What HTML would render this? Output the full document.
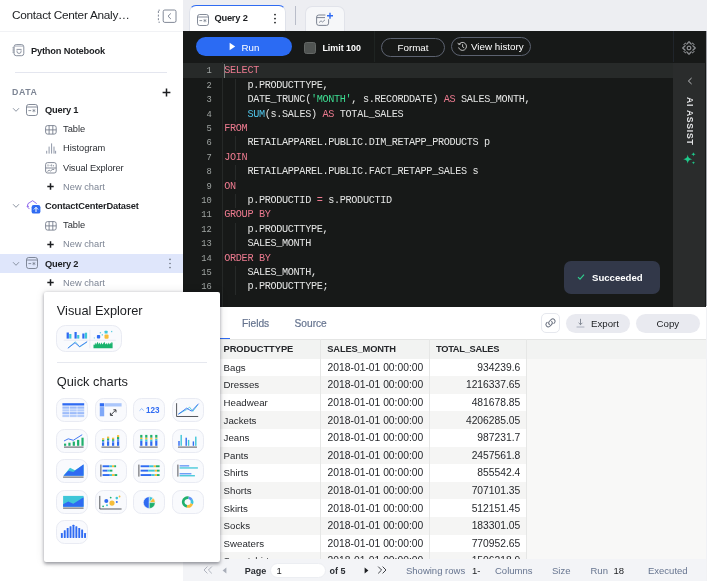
<!DOCTYPE html>
<html>
<head>
<meta charset="utf-8">
<title>Query 2</title>
<style>
*{box-sizing:border-box;margin:0;padding:0}
html,body{width:707px;height:581px;overflow:hidden;background:#fff;font-family:"Liberation Sans",sans-serif;color:#1c1e21}
.abs{position:absolute}
#app{will-change:transform;position:relative;width:707px;height:581px;overflow:hidden}
/* sidebar */
#side{position:absolute;left:0;top:0;width:183px;height:581px;background:#fff}
#side .title{position:absolute;left:12px;top:8.4px;font-size:11.8px;letter-spacing:-0.27px;color:#1c1e21;white-space:nowrap}
#side .hdrline{position:absolute;left:0;top:31px;width:183px;height:1px;background:#f1f2f5}
.row{position:absolute;left:0;width:183px;height:19.2px;font-size:9.3px;line-height:19.2px;white-space:nowrap}
.row .t{position:absolute;top:0}
.row.b .t,.sbt{font-weight:bold;color:#1c1e21;font-size:9.3px;letter-spacing:-0.2px;white-space:nowrap}
.row.n .t{color:#2b2e33}
.row.g .t{color:#7d8594}
.chev{position:absolute;left:12px;top:6px;width:8px;height:8px}
/* main */
#tabs{position:absolute;left:183px;top:0;width:524px;height:31px;background:#edeef2}
#editor{position:absolute;left:183px;top:31.2px;width:522.8px;height:275.7px;background:#171918}
#toolbar{position:absolute;left:0;top:0;width:522.5px;height:31px;background:#171918}
.code{position:absolute;left:0;top:31px;width:490px;height:245px;font-family:"Liberation Mono",monospace;font-size:10.2px;letter-spacing:-0.34px;line-height:14.4px;color:#e4e5e4;white-space:pre}
.ln{position:absolute;left:0.6px;width:28px;text-align:right;color:#9fa4a2;font-size:8.8px;letter-spacing:-0.1px;height:14.4px}
.cl{position:absolute;left:41.3px;height:14.4px}
.k{color:#ec7a8f}.f{color:#4fc3e8}.s{color:#3ddc91}
#results{position:absolute;left:183px;top:307px;width:524px;height:274px;background:#fff}
.hc{position:absolute;top:1.2px;height:19px;line-height:19px;font-size:9.3px;letter-spacing:-0.05px;font-weight:bold;color:#26282c;white-space:nowrap}
.tr{position:absolute;left:0;width:343.5px;height:17.6px;font-size:10.3px;line-height:17.6px;color:#26282c;white-space:nowrap}
.tr span{position:absolute;top:0.2px}
.c1{left:40.6px;font-size:9.7px}.c2{left:144.6px}.c3{right:6.2px}
.sb{top:0.8px}
#pop{position:absolute;left:44px;top:292.2px;width:175.6px;height:270.2px;background:#fff;border-radius:2px;box-shadow:0 1.5px 3.5px rgba(10,12,25,0.38),0 0 10px rgba(10,12,25,0.10)}
.ic{position:absolute;width:32.2px;height:24px;border-radius:8.5px;background:#f9fafd;border:0.8px solid #e9ebf3;overflow:hidden}
.ic svg{position:absolute;left:-0.8px;top:-0.8px}
</style>
</head>
<body>
<div id="app">

<!-- MAIN -->
<div id="tabs">
  <div class="abs" style="left:6.4px;top:4.7px;width:96.6px;height:27px;background:#fff;border-radius:7px 7px 0 0;border:0.8px solid #dfe2ea;border-top:1.5px solid #2f6bf2;border-bottom:none"></div>
  <svg class="abs" style="left:13.6px;top:13.6px" width="12" height="12" viewBox="0 0 12 12" fill="none" stroke="#6f7787" stroke-width="0.85"><rect x="0.5" y="0.5" width="11" height="11" rx="2.2"/><path d="M0.5 3H11.5"/><path d="M2.4 6.6H5.2" stroke-width="0.8"/><path d="M7.9 4.9V8.3M6.4 5.8L9.4 7.4M9.4 5.8L6.4 7.4" stroke-width="0.6"/></svg>
  <div class="abs sbt" style="left:31.4px;top:12px;line-height:13px">Query 2</div>
  <svg class="abs" style="left:90.4px;top:13px" width="4" height="12" viewBox="0 0 4 12" fill="#1c1e21"><circle cx="2" cy="1.6" r="0.9"/><circle cx="2" cy="5.6" r="0.9"/><circle cx="2" cy="9.6" r="0.9"/></svg>
  <div class="abs" style="left:112.2px;top:6px;width:1px;height:19px;background:#b9bdc9"></div>
  <div class="abs" style="left:122.4px;top:6px;width:39.2px;height:26px;background:#f6f7f9;border-radius:7px 7px 0 0;border:0.8px solid #e1e3ea;border-bottom:none"></div>
  <svg class="abs" style="left:133px;top:11.6px" width="19" height="15" viewBox="0 0 19 15" fill="none"><rect x="0.6" y="3" width="12" height="10.4" rx="2.2" stroke="#6f7787" stroke-width="0.9"/><path d="M0.6 5.6H9" stroke="#6f7787" stroke-width="0.9"/><path d="M3 10.6L5 8.8L6.6 10L9 7.8" stroke="#6f7787" stroke-width="0.8"/><rect x="9.4" y="0" width="9" height="7.2" fill="#f6f7f9"/><path d="M14 0.8V6.8M11 3.8H17" stroke="#2f6bf2" stroke-width="1.4"/></svg>
</div>
<div class="abs" style="left:705px;top:31.2px;width:2px;height:275.3px;background:#a3a5ab"></div>
<div class="abs" style="left:705.8px;top:306.5px;width:2px;height:275px;background:#f1f2f5;z-index:3"></div>
<div id="editor">
  <div id="toolbar">
    <div class="abs" style="left:13px;top:6px;width:96px;height:19px;border-radius:10px;background:#2b6bf3"></div>
    <svg class="abs" style="left:46px;top:11px" width="7" height="9" viewBox="0 0 7 9" fill="#fff"><path d="M0.6 0.8L6.2 4.5L0.6 8.2Z"/></svg>
    <div class="abs" style="left:58.6px;top:9.4px;font-size:9.7px;line-height:13px;color:#fff">Run</div>
    <div class="abs" style="left:120.8px;top:10.5px;width:12.2px;height:12.2px;border-radius:2.5px;background:#505452;border:1px solid #646866"></div>
    <div class="abs" style="left:139.4px;top:10.4px;font-size:8.9px;font-weight:bold;line-height:13px;color:#fff;white-space:nowrap">Limit 100</div>
    <div class="abs" style="left:191px;top:0;width:1px;height:31px;background:#1f2422"></div>
    <div class="abs" style="left:198px;top:7px;width:64px;height:19px;border-radius:10px;border:1px solid #5c6270"></div>
    <div class="abs" style="left:198px;top:10px;width:64px;text-align:center;font-size:9.8px;line-height:13px;color:#fff">Format</div>
    <div class="abs" style="left:268px;top:6px;width:80px;height:19px;border-radius:10px;border:1px solid #5c6270"></div>
    <svg class="abs" style="left:274px;top:10px" width="11" height="11" viewBox="0 0 11 11" fill="none" stroke="#e6e6e6" stroke-width="0.8"><path d="M2 3.4A4 4 0 1 1 1.6 6.4"/><path d="M0.8 1.8L1.9 3.6L3.8 2.8" stroke-linejoin="round"/><path d="M5.6 3.2V5.8L7.2 6.8"/></svg>
    <div class="abs" style="left:288px;top:9px;font-size:9.8px;line-height:13px;color:#fff;white-space:nowrap">View history</div>
    <div class="abs" style="left:490px;top:0;width:1px;height:31px;background:#20252b"></div>
    <svg class="abs" style="left:499.4px;top:10px" width="14" height="14" viewBox="0 0 14 14" fill="none" stroke="#c9ccd1" stroke-width="0.8" stroke-linejoin="round"><path d="M5.90 2.64L6.00 0.98L8.00 0.98L8.10 2.64L9.31 3.14L10.55 2.04L11.96 3.45L10.86 4.69L11.36 5.90L13.02 6.00L13.02 8.00L11.36 8.10L10.86 9.31L11.96 10.55L10.55 11.96L9.31 10.86L8.10 11.36L8.00 13.02L6.00 13.02L5.90 11.36L4.69 10.86L3.45 11.96L2.04 10.55L3.14 9.31L2.64 8.10L0.98 8.00L0.98 6.00L2.64 5.90L3.14 4.69L2.04 3.45L3.45 2.04L4.69 3.14Z"/><circle cx="7" cy="7" r="1.9"/></svg>
  </div>
  <div class="code" id="code">
<div class="abs" style="left:0;top:1.3px;width:490px;height:14.6px;background:#272a29"></div>
<div class="abs" style="left:38.5px;top:0;width:1px;height:245px;background:#262928"></div>
<div class="abs" style="left:41px;top:1.8px;width:1.2px;height:13.8px;background:#7d8381"></div>
<div class="ln" style="top:2.2px">1</div><div class="cl" style="top:2.2px"><span class="k">SELECT</span></div>
<div class="abs" style="left:52.3px;top:16.6px;width:1px;height:14.4px;background:#272a29"></div><div class="ln" style="top:16.6px">2</div><div class="cl" style="top:16.6px">    p.PRODUCTTYPE,</div>
<div class="abs" style="left:52.3px;top:31.0px;width:1px;height:14.4px;background:#272a29"></div><div class="ln" style="top:31.0px">3</div><div class="cl" style="top:31.0px">    DATE_TRUNC(<span class="s">'MONTH'</span>, s.RECORDDATE) <span class="k">AS</span> SALES_MONTH,</div>
<div class="abs" style="left:52.3px;top:45.4px;width:1px;height:14.4px;background:#272a29"></div><div class="ln" style="top:45.4px">4</div><div class="cl" style="top:45.4px">    <span class="f">SUM</span>(s.SALES) <span class="k">AS</span> TOTAL_SALES</div>
<div class="ln" style="top:59.8px">5</div><div class="cl" style="top:59.8px"><span class="k">FROM</span></div>
<div class="abs" style="left:52.3px;top:74.2px;width:1px;height:14.4px;background:#272a29"></div><div class="ln" style="top:74.2px">6</div><div class="cl" style="top:74.2px">    RETAILAPPAREL.PUBLIC.DIM_RETAPP_PRODUCTS p</div>
<div class="ln" style="top:88.6px">7</div><div class="cl" style="top:88.6px"><span class="k">JOIN</span></div>
<div class="abs" style="left:52.3px;top:103.0px;width:1px;height:14.4px;background:#272a29"></div><div class="ln" style="top:103.0px">8</div><div class="cl" style="top:103.0px">    RETAILAPPAREL.PUBLIC.FACT_RETAPP_SALES s</div>
<div class="ln" style="top:117.4px">9</div><div class="cl" style="top:117.4px"><span class="k">ON</span></div>
<div class="abs" style="left:52.3px;top:131.8px;width:1px;height:14.4px;background:#272a29"></div><div class="ln" style="top:131.8px">10</div><div class="cl" style="top:131.8px">    p.PRODUCTID <span class="k">=</span> s.PRODUCTID</div>
<div class="ln" style="top:146.2px">11</div><div class="cl" style="top:146.2px"><span class="k">GROUP BY</span></div>
<div class="abs" style="left:52.3px;top:160.6px;width:1px;height:14.4px;background:#272a29"></div><div class="ln" style="top:160.6px">12</div><div class="cl" style="top:160.6px">    p.PRODUCTTYPE,</div>
<div class="abs" style="left:52.3px;top:175.0px;width:1px;height:14.4px;background:#272a29"></div><div class="ln" style="top:175.0px">13</div><div class="cl" style="top:175.0px">    SALES_MONTH</div>
<div class="ln" style="top:189.4px">14</div><div class="cl" style="top:189.4px"><span class="k">ORDER BY</span></div>
<div class="abs" style="left:52.3px;top:203.8px;width:1px;height:14.4px;background:#272a29"></div><div class="ln" style="top:203.8px">15</div><div class="cl" style="top:203.8px">    SALES_MONTH,</div>
<div class="abs" style="left:52.3px;top:218.2px;width:1px;height:14.4px;background:#272a29"></div><div class="ln" style="top:218.2px">16</div><div class="cl" style="top:218.2px">    p.PRODUCTTYPE;</div>
</div>
  <div class="abs" id="ai" style="left:490.4px;top:32px;width:32.1px;height:244px;background:#2a2c2c">
    <svg class="abs" style="left:13.2px;top:13.6px" width="6" height="8" viewBox="0 0 6 8" fill="none" stroke="#d5d7da" stroke-width="0.85"><path d="M4.6 1L1.4 4L4.6 7"/></svg>
    <div class="abs" style="left:0;top:34px;width:33px;height:50px"><div style="position:absolute;left:16.2px;top:0;transform-origin:0 0;transform:rotate(90deg) translate(0,-50%);font-size:8.6px;font-weight:bold;letter-spacing:0.75px;color:#e3e4e6;white-space:nowrap;line-height:10px">AI ASSIST</div></div>
    <svg class="abs" style="left:9px;top:88px" width="15.4" height="15.4" viewBox="0 0 14 14" fill="#1fc98b"><path d="M5.2 3.2C5.6 6 6.4 6.9 9.4 7.4C6.4 7.9 5.6 8.8 5.2 11.6C4.8 8.8 4 7.9 1 7.4C4 6.9 4.8 6 5.2 3.2Z"/><path d="M10.4 0.8C10.6 2.2 11 2.6 12.6 2.9C11 3.2 10.6 3.6 10.4 5C10.2 3.6 9.8 3.2 8.2 2.9C9.8 2.6 10.2 2.2 10.4 0.8Z"/><path d="M10.4 9.2C10.55 10.2 10.85 10.5 12 10.7C10.85 10.9 10.55 11.2 10.4 12.2C10.25 11.2 9.95 10.9 8.8 10.7C9.95 10.5 10.25 10.2 10.4 9.2Z"/></svg>
  </div>
  <div class="abs" id="toast" style="left:381px;top:230.2px;width:96px;height:32.2px;border-radius:7px;background:#323849">
    <svg class="abs" style="left:13px;top:12px" width="8" height="8" viewBox="0 0 8 8" fill="none" stroke="#2fd08f" stroke-width="1.1"><path d="M1 4.2L3 6.2L7 1.6"/></svg>
    <div class="abs" style="left:28px;top:10px;font-size:9.6px;font-weight:bold;line-height:13px;color:#fff;white-space:nowrap">Succeeded</div>
  </div>
</div>
<div id="results">
  <div class="abs" style="left:36px;top:31px;width:11px;height:2px;background:#2f6bf2"></div>
  <div class="abs" style="left:59px;top:10px;font-size:10.2px;line-height:13px;color:#66748f;-webkit-text-stroke:0.2px #66748f;white-space:nowrap">Fields</div>
  <div class="abs" style="left:111.5px;top:10px;font-size:10.2px;line-height:13px;color:#66748f;-webkit-text-stroke:0.2px #66748f;white-space:nowrap">Source</div>
  <div class="abs" style="left:358px;top:6px;width:19px;height:20px;border:1px solid #e6e8ee;border-radius:5px;background:#fff"></div>
  <svg class="abs" style="left:361px;top:10.2px" width="13" height="11.8" viewBox="0 0 11 10" fill="none" stroke="#6b7280" stroke-width="0.85" stroke-linecap="round"><path d="M4.6 6.4a2 2 0 0 1 0-2.8l1.6-1.6a2 2 0 0 1 2.8 2.8l-0.7 0.7"/><path d="M6.4 3.6a2 2 0 0 1 0 2.8l-1.6 1.6a2 2 0 0 1-2.8-2.8l0.7-0.7"/></svg>
  <div class="abs" style="left:383px;top:7px;width:64px;height:18.5px;border-radius:10px;background:#e9eaf0"></div>
  <svg class="abs" style="left:393px;top:11px" width="9" height="10" viewBox="0 0 9 10" fill="none" stroke="#6b7280" stroke-width="0.8"><path d="M4.5 0.8V6.6M2.6 4.8L4.5 6.7L6.4 4.8"/><path d="M0.6 9H8.4" stroke="#9aa1b0"/></svg>
  <div class="abs" style="left:408px;top:10px;font-size:9.7px;line-height:13px;color:#1c1e21">Export</div>
  <div class="abs" style="left:453px;top:7px;width:63.8px;height:18.5px;border-radius:10px;background:#e9eaf0"></div>
  <div class="abs" style="left:453px;top:10px;width:63.8px;text-align:center;font-size:9.7px;line-height:13px;color:#1c1e21">Copy</div>

  <div class="abs" id="grid" style="left:0;top:32px;width:524px;height:220px;background:#f8f8f7;overflow:hidden">
    <div class="abs" style="left:0;top:0;width:524px;height:19.6px;background:#f2f3f2;border-top:1px solid #e4e5e4"></div>
    <div class="hc" style="left:40.5px">PRODUCTTYPE</div>
    <div class="hc" style="left:144.3px;letter-spacing:-0.15px">SALES_MONTH</div>
    <div class="hc" style="left:253px;letter-spacing:-0.29px">TOTAL_SALES</div>
    <div class="tr" style="top:19.6px;background:#fff"><span class="c1">Bags</span><span class="c2">2018-01-01 00:00:00</span><span class="c3">934239.6</span></div>
    <div class="tr" style="top:37.2px;background:#f5f5f4"><span class="c1">Dresses</span><span class="c2">2018-01-01 00:00:00</span><span class="c3">1216337.65</span></div>
    <div class="tr" style="top:54.8px;background:#fff"><span class="c1">Headwear</span><span class="c2">2018-01-01 00:00:00</span><span class="c3">481678.85</span></div>
    <div class="tr" style="top:72.4px;background:#f5f5f4"><span class="c1">Jackets</span><span class="c2">2018-01-01 00:00:00</span><span class="c3">4206285.05</span></div>
    <div class="tr" style="top:90.0px;background:#fff"><span class="c1">Jeans</span><span class="c2">2018-01-01 00:00:00</span><span class="c3">987231.7</span></div>
    <div class="tr" style="top:107.6px;background:#f5f5f4"><span class="c1">Pants</span><span class="c2">2018-01-01 00:00:00</span><span class="c3">2457561.8</span></div>
    <div class="tr" style="top:125.2px;background:#fff"><span class="c1">Shirts</span><span class="c2">2018-01-01 00:00:00</span><span class="c3">855542.4</span></div>
    <div class="tr" style="top:142.8px;background:#f5f5f4"><span class="c1">Shorts</span><span class="c2">2018-01-01 00:00:00</span><span class="c3">707101.35</span></div>
    <div class="tr" style="top:160.4px;background:#fff"><span class="c1">Skirts</span><span class="c2">2018-01-01 00:00:00</span><span class="c3">512151.45</span></div>
    <div class="tr" style="top:178.0px;background:#f5f5f4"><span class="c1">Socks</span><span class="c2">2018-01-01 00:00:00</span><span class="c3">183301.05</span></div>
    <div class="tr" style="top:195.6px;background:#fff"><span class="c1">Sweaters</span><span class="c2">2018-01-01 00:00:00</span><span class="c3">770952.65</span></div>
    <div class="tr" style="top:213.2px;background:#f5f5f4"><span class="c1">Sweatshirts</span><span class="c2">2018-01-01 00:00:00</span><span class="c3">1506218.9</span></div>
    <div class="abs" style="left:137px;top:0;width:1px;height:252px;background:#e6e7e6"></div>
    <div class="abs" style="left:246.2px;top:0;width:1px;height:252px;background:#e6e7e6"></div>
    <div class="abs" style="left:343px;top:0;width:1px;height:252px;background:#e6e7e6"></div>
  </div>

  <div class="abs" id="status" style="left:0;top:252px;width:524px;height:22px;background:#f3f4f7;font-size:9.5px;line-height:22px;white-space:nowrap">
    <svg class="abs" style="left:20px;top:7px" width="10" height="8" viewBox="0 0 10 8" fill="none" stroke="#a8adb8" stroke-width="0.9"><path d="M4.4 0.6L1 4L4.4 7.4M8.8 0.6L5.4 4L8.8 7.4"/></svg>
    <svg class="abs" style="left:39px;top:8px" width="5" height="7" viewBox="0 0 5 7" fill="#a8adb8"><path d="M4.4 0.4L0.6 3.5L4.4 6.6Z"/></svg>
    <div class="abs sb" style="left:61.8px;font-weight:bold;font-size:9px;color:#2b2e33">Page</div>
    <div class="abs" style="left:86.6px;top:4.2px;width:56.4px;height:15.2px;border-radius:8px;background:#fff;border:0.6px solid #eceef2"></div>
    <div class="abs sb" style="left:93.4px;color:#1c1e21">1</div>
    <div class="abs sb" style="left:146.6px;font-weight:bold;font-size:9px;color:#2b2e33">of 5</div>
    <svg class="abs" style="left:181px;top:8px" width="5" height="7" viewBox="0 0 5 7" fill="#1c1e21"><path d="M0.6 0.4L4.4 3.5L0.6 6.6Z"/></svg>
    <svg class="abs" style="left:194px;top:7px" width="10" height="8" viewBox="0 0 10 8" fill="none" stroke="#2b2e33" stroke-width="0.9"><path d="M1.2 0.6L4.6 4L1.2 7.4M5.6 0.6L9 4L5.6 7.4"/></svg>
    <div class="abs sb" style="left:223px;color:#66748f">Showing rows</div>
    <div class="abs sb" style="left:289px;color:#1c1e21">1-</div>
    <div class="abs sb" style="left:312px;color:#66748f">Columns</div>
    <div class="abs sb" style="left:369px;color:#66748f">Size</div>
    <div class="abs sb" style="left:407.5px;color:#66748f">Run</div>
    <div class="abs sb" style="left:430.5px;color:#1c1e21">18</div>
    <div class="abs sb" style="left:465px;color:#66748f">Executed</div>
  </div>
</div>

<!-- SIDEBAR -->
<div id="side">
  <div class="title">Contact Center Analy…</div>
  <svg class="abs" style="left:156px;top:8px" width="22" height="16" viewBox="0 0 22 16" fill="none" stroke="#737b8b" stroke-width="0.9">
    <rect x="7.2" y="2" width="12.8" height="12.4" rx="1.6"/>
    <path d="M14.6 5.7L12 8.2L14.6 10.7" stroke-linecap="round" stroke-linejoin="round"/>
    <path d="M2.4 3V13.6" stroke-dasharray="2 1.6"/><path d="M2.4 2.2H4M2.4 14.2H4" stroke-width="0.8"/>
  </svg>
  <div class="hdrline"></div>
  <svg class="abs" style="left:12px;top:44px" width="13" height="13" viewBox="0 0 13 13" fill="none" stroke="#737b8b" stroke-width="0.85">
    <rect x="2" y="0.6" width="9.8" height="11.1" rx="2.3"/>
    <path d="M2.3 1.6H11.5V2.6H2.3Z" fill="#a9aebb" stroke="none"/>
    <path d="M0.7 3.9H2M0.7 6H2M0.7 8.1H2" stroke-linecap="round" stroke-width="0.7"/>
    <path d="M4.5 5.4H9.6" stroke-width="0.8"/>
    <path d="M5 6.4V7.4a2.05 2.05 0 0 0 4.1 0V6.4" stroke-width="0.8"/>
  </svg>
  <div class="abs sbt" style="left:31px;top:44.8px;line-height:13px">Python Notebook</div>
  <div class="abs" style="left:15px;top:72px;width:152px;height:1px;background:#e4e6ef"></div>
  <div class="abs" style="left:12px;top:86px;font-size:8.8px;font-weight:bold;letter-spacing:0.6px;color:#7d8594;line-height:12px">DATA</div>
  <svg class="abs" style="left:162px;top:88px" width="9" height="9" viewBox="0 0 9 9" stroke="#1c1e21" stroke-width="1.5"><path d="M4.5 0.6V8.4M0.6 4.5H8.4"/></svg>
  <svg class="abs" style="left:12px;top:107.2px" width="8" height="6" viewBox="0 0 8 6" fill="none" stroke="#7b8494" stroke-width="0.85" stroke-linecap="round" stroke-linejoin="round"><path d="M1.3 1.5L4 4.3L6.7 1.5"/></svg><svg class="abs" style="left:26.3px;top:103.8px" width="12" height="12" viewBox="0 0 12 12" fill="none" stroke="#6f7787" stroke-width="0.85"><rect x="0.5" y="0.5" width="11" height="11" rx="2.2"/><path d="M0.5 3H11.5"/><path d="M2.4 6.6H5.2" stroke-width="0.8"/><path d="M7.9 4.9V8.3M6.4 5.8L9.4 7.4M9.4 5.8L6.4 7.4" stroke-width="0.6"/></svg><div class="row b" style="top:100.2px"><span class="t" style="left:45px;top:0.8px">Query 1</span></div>
  <svg class="abs" style="left:44.6px;top:124.7px" width="12" height="10" viewBox="0 0 12 10" fill="none" stroke="#6f7787" stroke-width="0.85"><rect x="0.6" y="0.6" width="10.6" height="8.5" rx="2"/><path d="M0.6 4.9H11.2M4.1 0.6V9.1M7.8 0.6V9.1"/></svg><div class="row n" style="top:119.4px"><span class="t" style="left:63px;top:0.8px">Table</span></div>
  <svg class="abs" style="left:46px;top:142.6px" width="11" height="11" viewBox="0 0 11 11" fill="none" stroke="#8a92a3" stroke-width="0.95"><path d="M0.7 10.6V7.8M3.1 10.6V3.6M5.6 10.6V0.4M8 10.6V3.6M9.6 10.6V7.8"/></svg><div class="row n" style="top:138.6px"><span class="t" style="left:63px;top:0.8px">Histogram</span></div>
  <svg class="abs" style="left:44.6px;top:161.6px" width="12" height="12" viewBox="0 0 12 12" fill="none" stroke="#6f7787" stroke-width="0.85"><rect x="0.6" y="0.6" width="10.6" height="10.4" rx="2"/><path d="M0.6 6H11.2"/><path d="M3 2.4V4.4M4.6 3.4H5.6M6.6 2.4V4.4M8.4 3V4.4" stroke-width="0.7"/><path d="M2.4 9.4L4.2 8.2L5.6 9L7.2 7.6L9.2 7.4" stroke-width="0.8" stroke-linejoin="round"/></svg><div class="row n" style="top:157.8px"><span class="t" style="left:63px;top:0.8px;letter-spacing:-0.12px">Visual Explorer</span></div>
  <svg class="abs" style="left:47.3px;top:183.1px" width="7" height="7" viewBox="0 0 7 7" stroke="#1c1e21" stroke-width="1.5"><path d="M3.5 0.3V6.7M0.3 3.5H6.7"/></svg><div class="row g" style="top:177.0px"><span class="t" style="left:63px;top:0.8px">New chart</span></div>
  <svg class="abs" style="left:12px;top:203.2px" width="8" height="6" viewBox="0 0 8 6" fill="none" stroke="#7b8494" stroke-width="0.85" stroke-linecap="round" stroke-linejoin="round"><path d="M1.3 1.5L4 4.3L6.7 1.5"/></svg><svg class="abs" style="left:25px;top:199.9px" width="17" height="16" viewBox="0 0 17 16" fill="none"><path d="M4.2 8.8L2.2 6.7L3 3.6L7.6 0.7L11.4 3.4" stroke="#7a4ce8" stroke-width="0.8" stroke-linejoin="round" stroke-linecap="round"/><path d="M2.2 6.7L4 6.2" stroke="#7a4ce8" stroke-width="0.8"/><rect x="6.6" y="5" width="8.8" height="8.6" rx="2.2" fill="#2f6bf2"/><path d="M11 11.6V7.6M9.2 9.2L11 7.4L12.8 9.2" stroke="#fff" stroke-width="1" stroke-linecap="round" stroke-linejoin="round"/></svg><div class="row b" style="top:196.2px"><span class="t" style="left:45px;top:0.8px">ContactCenterDataset</span></div>
  <svg class="abs" style="left:44.6px;top:220.7px" width="12" height="10" viewBox="0 0 12 10" fill="none" stroke="#6f7787" stroke-width="0.85"><rect x="0.6" y="0.6" width="10.6" height="8.5" rx="2"/><path d="M0.6 4.9H11.2M4.1 0.6V9.1M7.8 0.6V9.1"/></svg><div class="row n" style="top:215.4px"><span class="t" style="left:63px;top:0.8px">Table</span></div>
  <svg class="abs" style="left:47.3px;top:240.7px" width="7" height="7" viewBox="0 0 7 7" stroke="#1c1e21" stroke-width="1.5"><path d="M3.5 0.3V6.7M0.3 3.5H6.7"/></svg><div class="row g" style="top:234.6px"><span class="t" style="left:63px;top:0.8px">New chart</span></div>
  <div class="abs" style="left:0;top:253.9px;width:183px;height:19.2px;background:#dfe6fb"></div>
  <svg class="abs" style="left:12px;top:260.8px" width="8" height="6" viewBox="0 0 8 6" fill="none" stroke="#7b8494" stroke-width="0.85" stroke-linecap="round" stroke-linejoin="round"><path d="M1.3 1.5L4 4.3L6.7 1.5"/></svg><svg class="abs" style="left:26.3px;top:257.4px" width="12" height="12" viewBox="0 0 12 12" fill="none" stroke="#6f7787" stroke-width="0.85"><rect x="0.5" y="0.5" width="11" height="11" rx="2.2"/><path d="M0.5 3H11.5"/><path d="M2.4 6.6H5.2" stroke-width="0.8"/><path d="M7.9 4.9V8.3M6.4 5.8L9.4 7.4M9.4 5.8L6.4 7.4" stroke-width="0.6"/></svg><div class="row b" style="top:253.8px"><span class="t" style="left:45px;top:0.8px">Query 2</span></div><svg class="abs" style="left:168.2px;top:258.0px" width="4" height="11" viewBox="0 0 4 11" fill="#6b7280"><circle cx="2" cy="1.4" r="0.8"/><circle cx="2" cy="5.5" r="0.8"/><circle cx="2" cy="9.6" r="0.8"/></svg>
  <svg class="abs" style="left:47.3px;top:279.1px" width="7" height="7" viewBox="0 0 7 7" stroke="#1c1e21" stroke-width="1.5"><path d="M3.5 0.3V6.7M0.3 3.5H6.7"/></svg><div class="row g" style="top:273.0px"><span class="t" style="left:63px;top:0.8px">New chart</span></div>
</div>

<!-- POPUP -->
<div id="pop">
  <div class="abs" style="left:12.8px;top:11.1px;font-size:12.8px;line-height:16px;color:#1c1e21;white-space:nowrap">Visual Explorer</div>
  <div class="ic" style="left:12.4px;top:33.2px;width:65.4px;height:26.6px;border-radius:9.5px">
    <svg width="65.4" height="26.6" viewBox="0 0 65.4 26.6" fill="none">
      <path d="M6.8 14.3H58.7M32.9 3.9V22.3" stroke="#d9ddea" stroke-width="0.5"/>
      <rect x="9.6" y="6.5" width="2.3" height="6.1" fill="#2f6bf2"/><rect x="12.2" y="8" width="2.2" height="4.6" fill="#3ec6d8"/>
      <rect x="17.5" y="6" width="2.2" height="6.6" fill="#2f6bf2"/><rect x="20.2" y="9" width="2.1" height="3.6" fill="#3ec6d8"/>
      <rect x="25.3" y="7.5" width="2.2" height="5.1" fill="#2f6bf2"/><rect x="27.8" y="6.7" width="2.3" height="5.9" fill="#3ec6d8"/>
      <path d="M11.2 21.8L18.4 15.8L22.8 21L30 16" stroke="#3ec6d8" stroke-width="0.7"/>
      <path d="M10.8 22.3L18 16.8L22.5 20.6L30.2 15.6" stroke="#2f6bf2" stroke-width="0.8"/>
      <rect x="39.9" y="9" width="3.3" height="3.6" rx="0.8" fill="#2f6bf2"/>
      <rect x="47.5" y="8.5" width="4.1" height="4.3" rx="1.1" fill="#f6bd3a"/>
      <rect x="47.6" y="4.7" width="3" height="2.8" rx="0.5" fill="#3ec6d8"/>
      <rect x="42.8" y="6.1" width="1.3" height="1.3" fill="#3ec6d8" opacity="0.8"/><rect x="44.7" y="8.2" width="1.3" height="1.3" fill="#3ec6d8" opacity="0.8"/><rect x="36.8" y="11.4" width="1.1" height="1.1" fill="#3ec6d8" opacity="0.7"/><rect x="54" y="4.9" width="1.3" height="1.3" fill="#3ec6d8" opacity="0.8"/>
      <path d="M36.5 22.3V18.6L37.4 19.2L38.2 16.4L39 18.8L39.8 17.2L40.8 15.8L41.6 18.6L42.6 16.6L43.6 18.8L44.4 16.2L45.4 18.6L46.4 17.2L47.4 15.8L48.4 18.4L49.4 17L50.4 18.8L51.2 16.4L52.2 18.4L53.2 16.8L54 18L54.8 15.8L55.6 17V22.3Z" fill="#19b36e"/>
    </svg>
  </div>
  <div class="abs" style="left:12.7px;top:70.2px;width:150px;height:1px;background:#e6e8ef"></div>
  <div class="abs" style="left:12.8px;top:81.8px;font-size:12.8px;line-height:16px;color:#1c1e21;white-space:nowrap">Quick charts</div>
<!--ICONS-->
  <div class="ic" style="left:12.3px;top:105.9px"><svg width="32.2" height="24" viewBox="0 0 32.2 24" fill="none"><rect x="5.40" y="5.20" width="21.80" height="2.30" fill="#2f6bf2"/><rect x="5.40" y="8.50" width="6.90" height="2.20" fill="#9dbcfa"/><rect x="12.85" y="8.50" width="6.90" height="2.20" fill="#9dbcfa"/><rect x="20.30" y="8.50" width="6.90" height="2.20" fill="#9dbcfa"/><rect x="5.40" y="11.30" width="6.90" height="2.20" fill="#b5cdfb"/><rect x="12.85" y="11.30" width="6.90" height="2.20" fill="#b5cdfb"/><rect x="20.30" y="11.30" width="6.90" height="2.20" fill="#b5cdfb"/><rect x="5.40" y="14.10" width="6.90" height="2.20" fill="#9dbcfa"/><rect x="12.85" y="14.10" width="6.90" height="2.20" fill="#9dbcfa"/><rect x="20.30" y="14.10" width="6.90" height="2.20" fill="#9dbcfa"/><rect x="5.40" y="16.90" width="6.90" height="2.20" fill="#b5cdfb"/><rect x="12.85" y="16.90" width="6.90" height="2.20" fill="#b5cdfb"/><rect x="20.30" y="16.90" width="6.90" height="2.20" fill="#b5cdfb"/></svg></div>
  <div class="ic" style="left:50.7px;top:105.9px"><svg width="32.2" height="24" viewBox="0 0 32.2 24" fill="none"><rect x="4.80" y="5.20" width="4.40" height="3.30" fill="#2f6bf2"/><rect x="4.80" y="9.10" width="4.40" height="9.20" fill="#7fa8f8"/><rect x="9.80" y="5.20" width="16.80" height="3.30" fill="#aac6fb"/><path d="M15.8 17L20.6 12.2" stroke="#2a2d33" stroke-width="0.9"/><path d="M15.4 14.8V17.4H18M18.4 11.8H21V14.4" stroke="#2a2d33" stroke-width="0.9" stroke-linejoin="miter"/></svg></div>
  <div class="ic" style="left:89.1px;top:105.9px"><svg width="32.2" height="24" viewBox="0 0 32.2 24" fill="none"><path d="M6.6 12.6L8.7 10.6L10.8 12.6" stroke="#7fb0f8" stroke-width="0.9"/><text x="13" y="15.5" font-family="Liberation Sans, sans-serif" font-weight="bold" font-size="8.8" textLength="13.6" lengthAdjust="spacingAndGlyphs" fill="#2f6bf2">123</text></svg></div>
  <div class="ic" style="left:127.5px;top:105.9px"><svg width="32.2" height="24" viewBox="0 0 32.2 24" fill="none"><path d="M4.6 5.2V18.5H26.2" stroke="#2a2d33" stroke-width="0.8"/><path d="M6.6 15.8L14.6 11.6L17.6 9.2L20.8 13.4L25.6 7" stroke="#3ec6d8" stroke-width="0.8"/><path d="M6.3 16.3L14.6 10.2L19.6 13.1L26.6 5.7" stroke="#2f6bf2" stroke-width="0.9"/></svg></div>
  <div class="ic" style="left:12.3px;top:136.4px"><svg width="32.2" height="24" viewBox="0 0 32.2 24" fill="none"><rect x="7.00" y="14.60" width="2.20" height="2.20" fill="#1fb06d"/><rect x="11.36" y="13.70" width="2.20" height="3.10" fill="#1fb06d"/><rect x="15.72" y="12.60" width="2.20" height="4.20" fill="#1fb06d"/><rect x="20.08" y="10.90" width="2.20" height="5.90" fill="#1fb06d"/><rect x="24.44" y="8.70" width="2.20" height="8.10" fill="#1fb06d"/><path d="M7 12L11.3 9.8L16.3 11.3L25.2 5.7" stroke="#2f6bf2" stroke-width="0.9"/><path d="M7.0 18.1H26.6" stroke="#2a2d33" stroke-width="0.8"/></svg></div>
  <div class="ic" style="left:50.7px;top:136.4px"><svg width="32.2" height="24" viewBox="0 0 32.2 24" fill="none"><rect x="7.00" y="13.61" width="2.20" height="3.19" fill="#2f6bf2"/><rect x="7.00" y="12.09" width="2.20" height="1.52" fill="#5f93f6"/><rect x="7.00" y="10.57" width="2.20" height="1.52" fill="#1fb06d"/><rect x="7.00" y="9.20" width="2.20" height="1.37" fill="#f6bd3a"/><rect x="12.00" y="12.94" width="2.20" height="3.86" fill="#2f6bf2"/><rect x="12.00" y="11.10" width="2.20" height="1.84" fill="#5f93f6"/><rect x="12.00" y="9.26" width="2.20" height="1.84" fill="#1fb06d"/><rect x="12.00" y="7.60" width="2.20" height="1.66" fill="#f6bd3a"/><rect x="17.00" y="13.40" width="2.20" height="3.40" fill="#2f6bf2"/><rect x="17.00" y="11.78" width="2.20" height="1.62" fill="#5f93f6"/><rect x="17.00" y="10.16" width="2.20" height="1.62" fill="#1fb06d"/><rect x="17.00" y="8.70" width="2.20" height="1.46" fill="#f6bd3a"/><rect x="22.00" y="12.31" width="2.20" height="4.49" fill="#2f6bf2"/><rect x="22.00" y="10.17" width="2.20" height="2.14" fill="#5f93f6"/><rect x="22.00" y="8.03" width="2.20" height="2.14" fill="#1fb06d"/><rect x="22.00" y="6.10" width="2.20" height="1.93" fill="#f6bd3a"/><path d="M6.5 18.1H24.7" stroke="#2a2d33" stroke-width="0.8"/></svg></div>
  <div class="ic" style="left:89.1px;top:136.4px"><svg width="32.2" height="24" viewBox="0 0 32.2 24" fill="none"><rect x="7.20" y="11.89" width="2.20" height="4.91" fill="#2f6bf2"/><rect x="7.20" y="10.04" width="2.20" height="1.85" fill="#3ec6d8"/><rect x="7.20" y="8.62" width="2.20" height="1.42" fill="#f6bd3a"/><rect x="7.20" y="5.90" width="2.20" height="2.73" fill="#1fb06d"/><rect x="12.20" y="12.44" width="2.20" height="4.36" fill="#2f6bf2"/><rect x="12.20" y="10.26" width="2.20" height="2.18" fill="#3ec6d8"/><rect x="12.20" y="8.63" width="2.20" height="1.64" fill="#f6bd3a"/><rect x="12.20" y="5.90" width="2.20" height="2.73" fill="#1fb06d"/><rect x="17.20" y="12.22" width="2.20" height="4.58" fill="#2f6bf2"/><rect x="17.20" y="10.48" width="2.20" height="1.74" fill="#3ec6d8"/><rect x="17.20" y="8.63" width="2.20" height="1.85" fill="#f6bd3a"/><rect x="17.20" y="5.90" width="2.20" height="2.73" fill="#1fb06d"/><rect x="22.20" y="11.35" width="2.20" height="5.45" fill="#2f6bf2"/><rect x="22.20" y="9.72" width="2.20" height="1.64" fill="#3ec6d8"/><rect x="22.20" y="8.63" width="2.20" height="1.09" fill="#f6bd3a"/><rect x="22.20" y="5.90" width="2.20" height="2.73" fill="#1fb06d"/><path d="M6.5 18.1H24.7" stroke="#2a2d33" stroke-width="0.8"/></svg></div>
  <div class="ic" style="left:127.5px;top:136.4px"><svg width="32.2" height="24" viewBox="0 0 32.2 24" fill="none"><rect x="6.30" y="12.00" width="1.40" height="4.80" fill="#2f6bf2"/><rect x="8.50" y="5.90" width="1.40" height="10.90" fill="#3ec6d8"/><rect x="13.50" y="8.70" width="1.40" height="8.10" fill="#2f6bf2"/><rect x="15.90" y="10.90" width="1.40" height="5.90" fill="#3ec6d8"/><rect x="20.70" y="12.40" width="1.40" height="4.40" fill="#2f6bf2"/><rect x="23.10" y="7.60" width="1.40" height="9.20" fill="#3ec6d8"/><path d="M6.0 18.1H25.0" stroke="#2a2d33" stroke-width="0.8"/></svg></div>
  <div class="ic" style="left:12.3px;top:166.9px"><svg width="32.2" height="24" viewBox="0 0 32.2 24" fill="none"><path d="M6.5 16.8L13 8.7L17.9 11.3L26.6 5.7V16.8Z" fill="#3ec6d8"/><path d="M6.5 16.8L11.3 11.8L16.3 13.1L26.6 5.2V16.8Z" fill="#2f6bf2"/><path d="M6.1 18.1H26.6" stroke="#2a2d33" stroke-width="0.8"/></svg></div>
  <div class="ic" style="left:50.7px;top:166.9px"><svg width="32.2" height="24" viewBox="0 0 32.2 24" fill="none"><path d="M5.9 5.6V17.6" stroke="#2a2d33" stroke-width="0.8"/><rect x="7.60" y="6.30" width="6.60" height="1.90" fill="#2f6bf2"/><rect x="14.20" y="6.30" width="2.80" height="1.90" fill="#3ec6d8"/><rect x="17.00" y="6.30" width="2.20" height="1.90" fill="#f6bd3a"/><rect x="19.20" y="6.30" width="1.90" height="1.90" fill="#1fb06d"/><rect x="7.60" y="10.70" width="5.00" height="1.90" fill="#2f6bf2"/><rect x="12.60" y="10.70" width="2.20" height="1.90" fill="#3ec6d8"/><rect x="14.80" y="10.70" width="2.60" height="1.90" fill="#1fb06d"/><rect x="7.60" y="15.10" width="7.20" height="1.90" fill="#2f6bf2"/><rect x="14.80" y="15.10" width="2.20" height="1.90" fill="#3ec6d8"/><rect x="17.00" y="15.10" width="2.60" height="1.90" fill="#f6bd3a"/><rect x="19.60" y="15.10" width="2.60" height="1.90" fill="#1fb06d"/></svg></div>
  <div class="ic" style="left:89.1px;top:166.9px"><svg width="32.2" height="24" viewBox="0 0 32.2 24" fill="none"><path d="M5.9 5.6V17.6" stroke="#2a2d33" stroke-width="0.8"/><rect x="7.60" y="6.30" width="8.70" height="1.90" fill="#2f6bf2"/><rect x="16.30" y="6.30" width="4.40" height="1.90" fill="#3ec6d8"/><rect x="20.70" y="6.30" width="2.20" height="1.90" fill="#f6bd3a"/><rect x="22.90" y="6.30" width="3.70" height="1.90" fill="#1fb06d"/><rect x="7.60" y="10.70" width="7.60" height="1.90" fill="#2f6bf2"/><rect x="15.20" y="10.70" width="6.60" height="1.90" fill="#3ec6d8"/><rect x="21.80" y="10.70" width="2.20" height="1.90" fill="#f6bd3a"/><rect x="24.00" y="10.70" width="2.60" height="1.90" fill="#1fb06d"/><rect x="7.60" y="15.10" width="10.90" height="1.90" fill="#2f6bf2"/><rect x="18.50" y="15.10" width="3.30" height="1.90" fill="#3ec6d8"/><rect x="21.80" y="15.10" width="2.20" height="1.90" fill="#f6bd3a"/><rect x="24.00" y="15.10" width="2.60" height="1.90" fill="#1fb06d"/></svg></div>
  <div class="ic" style="left:127.5px;top:166.9px"><svg width="32.2" height="24" viewBox="0 0 32.2 24" fill="none"><path d="M5.9 5.6V17.6" stroke="#2a2d33" stroke-width="0.8"/><rect x="7.60" y="6.20" width="9.60" height="1.30" fill="#5f93f6"/><rect x="7.60" y="8.30" width="18.30" height="1.30" fill="#3ec6d8"/><rect x="7.60" y="14.10" width="11.80" height="1.30" fill="#5f93f6"/><rect x="7.60" y="16.10" width="15.30" height="1.30" fill="#3ec6d8"/></svg></div>
  <div class="ic" style="left:12.3px;top:197.4px"><svg width="32.2" height="24" viewBox="0 0 32.2 24" fill="none"><rect x="6.10" y="5.90" width="20.50" height="10.90" fill="#3ec6d8"/><path d="M6.1 16.8V14.2L11.3 11.5L16.3 13.7L26.6 7.2V16.8Z" fill="#2f6bf2"/><path d="M6.1 18.1H26.6" stroke="#2a2d33" stroke-width="0.8"/></svg></div>
  <div class="ic" style="left:50.7px;top:197.4px"><svg width="32.2" height="24" viewBox="0 0 32.2 24" fill="none"><path d="M4.8 5.9V19H26.6" stroke="#2a2d33" stroke-width="0.8"/><circle cx="11.3" cy="10.9" r="2.0" fill="#2f6bf2"/><circle cx="17.0" cy="13.1" r="2.6" fill="#f6bd3a"/><circle cx="21.8" cy="8.1" r="1.3" fill="#3ec6d8"/><circle cx="21.8" cy="12.0" r="1.0" fill="#2f6bf2"/><circle cx="15.7" cy="7.6" r="0.9" fill="#1fb06d"/><circle cx="12.0" cy="15.2" r="1.0" fill="#3ec6d8"/><circle cx="8.1" cy="16.3" r="0.9" fill="#1fb06d"/><circle cx="24.6" cy="6.5" r="0.9" fill="#f6bd3a"/></svg></div>
  <div class="ic" style="left:89.1px;top:197.4px"><svg width="32.2" height="24" viewBox="0 0 32.2 24" fill="none"><path d="M16.30 12.60L16.30 18.50A5.90 5.90 0 0 1 16.30 6.70Z" fill="#2f6bf2" stroke="#f8f9fc" stroke-width="0.5"/><path d="M16.30 12.60L16.30 6.70A5.90 5.90 0 0 1 20.09 8.08Z" fill="#3ec6d8" stroke="#f8f9fc" stroke-width="0.5"/><path d="M16.30 12.60L20.09 8.08A5.90 5.90 0 0 1 22.20 12.60Z" fill="#f6bd3a" stroke="#f8f9fc" stroke-width="0.5"/><path d="M16.30 12.60L22.20 12.60A5.90 5.90 0 0 1 16.30 18.50Z" fill="#1fb06d" stroke="#f8f9fc" stroke-width="0.5"/></svg></div>
  <div class="ic" style="left:127.5px;top:197.4px"><svg width="32.2" height="24" viewBox="0 0 32.2 24" fill="none"><path d="M14.94 16.33A4.40 4.40 0 1 1 16.61 7.70" stroke="#1fb06d" stroke-width="2.7"/><path d="M16.61 7.70A4.40 4.40 0 0 1 19.58 9.93" stroke="#5f93f6" stroke-width="2.7"/><path d="M19.58 9.93A4.40 4.40 0 0 1 19.78 13.65" stroke="#3ec6d8" stroke-width="2.7"/><path d="M19.78 13.65A4.40 4.40 0 0 1 14.94 16.33" stroke="#f6bd3a" stroke-width="2.7"/></svg></div>
  <div class="ic" style="left:12.3px;top:227.9px"><svg width="32.2" height="24" viewBox="0 0 32.2 24" fill="none"><rect x="3.90" y="13.00" width="1.90" height="4.90" fill="#2f6bf2" rx="0.4"/><rect x="6.80" y="10.20" width="1.90" height="7.70" fill="#2f6bf2" rx="0.4"/><rect x="9.70" y="8.10" width="1.90" height="9.80" fill="#2f6bf2" rx="0.4"/><rect x="12.60" y="6.30" width="1.90" height="11.60" fill="#2f6bf2" rx="0.4"/><rect x="15.50" y="4.80" width="1.90" height="13.10" fill="#2f6bf2" rx="0.4"/><rect x="18.40" y="6.30" width="1.90" height="11.60" fill="#2f6bf2" rx="0.4"/><rect x="21.30" y="8.10" width="1.90" height="9.80" fill="#2f6bf2" rx="0.4"/><rect x="24.20" y="9.60" width="1.90" height="8.30" fill="#2f6bf2" rx="0.4"/><rect x="27.10" y="13.00" width="1.90" height="4.90" fill="#2f6bf2" rx="0.4"/></svg></div>
</div>

</div>
</body>
</html>
